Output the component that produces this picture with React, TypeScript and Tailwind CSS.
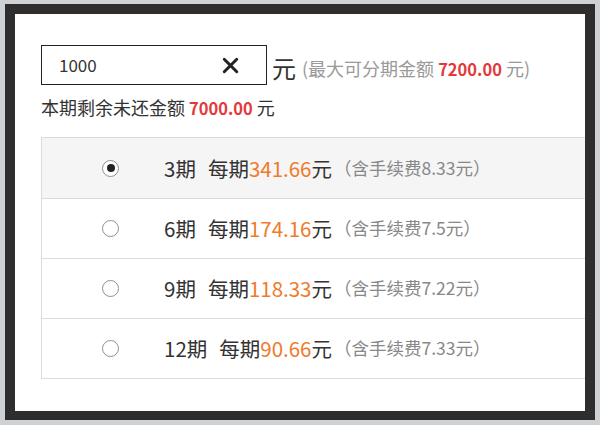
import { X } from 'lucide-react';

const plans = [
    { n: 3, per: '341.66', fee: '8.33', checked: true },
    { n: 6, per: '174.16', fee: '7.5', checked: false },
    { n: 9, per: '118.33', fee: '7.22', checked: false },
    { n: 12, per: '90.66', fee: '7.33', checked: false },
];

function Radio({ checked }: { checked: boolean }) {
    return (
        <span className="flex h-[17px] w-[17px] shrink-0 items-center justify-center rounded-full border border-[#8f8f8f] bg-white">
            {checked && <span className="h-[8px] w-[8px] rounded-full bg-[#222]" />}
        </span>
    );
}

export default function App() {
    return (
        <div
            className="h-[425px] w-[600px] overflow-hidden bg-[#cfd2d4] px-[5px] pt-[4px] pb-[5px]"
            style={{ fontFamily: '"Noto Sans CJK SC", "Noto Sans", sans-serif' }}
        >
            <div className="h-full w-full bg-[#2e2e2e] pt-[10px] pr-[10px] pb-[9px] pl-[10px]">
                <div className="h-full w-full overflow-hidden bg-white pt-[31px] pl-[26px]">
                    {/* amount input */}
                    <div className="flex items-end">
                        <div className="flex h-[40px] w-[226px] items-center justify-between border border-[#222] pr-[23px] pl-[17px]">
                            <span className="text-[17px] text-[#333]">1000</span>
                            <X className="h-[25px] w-[25px] text-[#222]" strokeWidth={2.8} />
                        </div>
                        <span className="ml-[5px] text-[24px] leading-[34px] text-[#333]">元</span>
                        <span className="ml-[6px] mb-[2px] text-[18px] leading-[28px] text-[#999]">
                            (最大可分期金额 <span className="text-[16.5px] font-bold text-[#e4393c]">7200.00</span> 元)
                        </span>
                    </div>

                    <div className="mt-[9px] text-[18px] leading-[26px] text-[#333]">
                        本期剩余未还金额 <span className="text-[16.5px] font-bold text-[#e4393c]">7000.00</span> 元
                    </div>

                    {/* installment options */}
                    <div className="mt-[16px] w-[560px] border-t border-b border-l border-[#dcdcdc]">
                        {plans.map((p, i) => (
                            <div
                                key={p.n}
                                className={`flex h-[60px] items-center pl-[60px] ${p.checked ? 'bg-[#f5f5f5]' : 'bg-white'} ${i > 0 ? 'border-t border-[#dcdcdc]' : ''}`}
                            >
                                <Radio checked={p.checked} />
                                <span className="ml-[45px] text-[20.5px] text-[#333]">
                                    {p.n}期
                                    <span className="ml-[12px]">每期</span>
                                    <span className="text-[#f07b2b]">{p.per}</span>元
                                </span>
                                <span className="ml-[2px] text-[17.5px] text-[#888]">（含手续费{p.fee}元）</span>
                            </div>
                        ))}
                    </div>
                </div>
            </div>
        </div>
    );
}
